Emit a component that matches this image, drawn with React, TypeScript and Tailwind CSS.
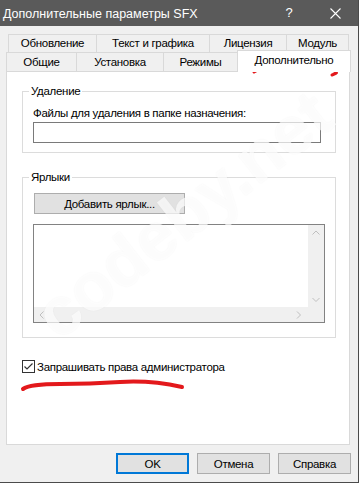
import React from "react";

function Chevron({ dir }: { dir: "up" | "down" | "left" | "right" }) {
  const pts: Record<string, string> = {
    up: "0.5,4.5 4,1 7.5,4.5",
    down: "0.5,1 4,4.5 7.5,1",
    left: "4.5,0.5 1,4 4.5,7.5",
    right: "1,0.5 4.5,4 1,7.5",
  };
  const horiz = dir === "left" || dir === "right";
  return (
    <svg width={horiz ? 6 : 8} height={horiz ? 8 : 6} viewBox={horiz ? "0 0 6 8" : "0 0 8 6"}>
      <polyline points={pts[dir]} fill="none" stroke="#bfbfbf" strokeWidth="1" />
    </svg>
  );
}

export default function App() {
  return (
    <div className="relative w-[359px] h-[483px] overflow-hidden bg-[#f0f0f0] border-r border-b border-[#4b4b4b] font-['Liberation_Sans',Arial,sans-serif] text-[11.5px] tracking-[-0.3px] text-black">
      {/* Title bar */}
      <div className="flex h-[26px] items-center bg-[#5a5a5a] text-white tracking-normal">
        <div className="flex-1 pl-[3px] text-[12.5px] leading-[16px] pt-[1px]">Дополнительные параметры SFX</div>
        <div className="flex h-[26px] w-[46px] items-center justify-center text-[13px] leading-[16px]">?</div>
        <div className="flex h-[26px] w-[46px] items-center justify-center">
          <svg width="11" height="11" viewBox="0 0 11 11">
            <path d="M0.5 0.5 L10.5 10.5 M10.5 0.5 L0.5 10.5" stroke="#ffffff" strokeWidth="1.1" />
          </svg>
        </div>
      </div>

      {/* Tabs */}
      <div className="mt-[8px]">
        <div className="ml-[8px] flex h-[18px]">
          <div className="w-[88px] border-l border-t border-[#d9d9d9] text-center leading-[17px]">Обновление</div>
          <div className="w-[113px] border-l border-t border-[#d9d9d9] text-center leading-[17px]">Текст и графика</div>
          <div className="w-[77px] border-l border-t border-[#d9d9d9] text-center leading-[17px]">Лицензия</div>
          <div className="w-[63px] border-l border-r border-t border-[#d9d9d9] text-center leading-[17px]">Модуль</div>
        </div>
        <div className="ml-[6px] flex h-[19px] items-start">
          <div className="h-[19px] w-[70px] border-l border-t border-[#d9d9d9] text-center leading-[19px]">Общие</div>
          <div className="h-[19px] w-[87px] border-l border-t border-[#d9d9d9] text-center leading-[19px]">Установка</div>
          <div className="h-[19px] w-[74px] border-l border-t border-[#d9d9d9] text-center leading-[19px]">Режимы</div>
          <div className="relative z-10 -mt-[2px] h-[22px] w-[114px] border-l border-r border-t border-[#d9d9d9] bg-white text-center leading-[18px]">Дополнительно</div>
        </div>
      </div>

      {/* Panel */}
      <div className="ml-[6px] h-[374px] w-[344px] border border-[#d9d9d9] bg-white pt-[19px]">
        {/* Group: Удаление */}
        <div className="relative ml-[15px] w-[314px] border border-[#dcdcdc] pb-[9px]">
          <span className="absolute left-[6px] top-[-9px] bg-white px-[2px] leading-[16px]">Удаление</span>
          <div className="ml-[10px] mt-[13px] leading-[16px]">Файлы для удаления в папке назначения:</div>
          <div className="ml-[10px] mt-[1px] h-[21px] w-[288px] border border-[#7a7a7a] bg-white" />
        </div>

        {/* Group: Ярлыки */}
        <div className="relative ml-[15px] mt-[24px] w-[314px] border border-[#dcdcdc] pb-[14px]">
          <span className="absolute left-[6px] top-[-9px] bg-white px-[2px] leading-[16px]">Ярлыки</span>
          <div className="ml-[11px] mt-[15px] flex h-[21px] w-[151px] items-center justify-center border border-[#adadad] bg-[#e1e1e1] leading-[16px]">
            Добавить ярлык...
          </div>
          <div className="ml-[10px] mt-[10px] grid h-[99px] w-[292px] grid-cols-[1fr_16px] grid-rows-[1fr_15px] border border-[#828282] bg-white">
            <div />
            <div className="flex flex-col items-center justify-between bg-[#f0f0f0] pb-[4px] pt-[5px]">
              <Chevron dir="up" />
              <Chevron dir="down" />
            </div>
            <div className="flex items-center justify-between bg-[#f0f0f0] pl-[5px] pr-[6px]">
              <Chevron dir="left" />
              <Chevron dir="right" />
            </div>
            <div className="bg-[#f0f0f0]" />
          </div>
        </div>

        {/* Checkbox */}
        <div className="ml-[15px] mt-[22px] flex h-[13px] items-center gap-[2px]">
          <div className="flex h-[13px] w-[13px] items-center justify-center border border-[#333333] bg-white">
            <svg width="11" height="11" viewBox="0 0 11 11">
              <polyline points="1.5,5.5 4,8 9.5,2.5" fill="none" stroke="#333333" strokeWidth="1.2" />
            </svg>
          </div>
          <span className="leading-[16px]">Запрашивать права администратора</span>
        </div>
      </div>

      {/* Buttons */}
      <div className="mt-[8px] flex justify-end gap-[8px] pr-[7px]">
        <div className="flex h-[21px] w-[73px] items-center justify-center border-2 border-[#0078d7] bg-[#e1e1e1] leading-[16px]">OK</div>
        <div className="flex h-[21px] w-[73px] items-center justify-center border border-[#adadad] bg-[#e1e1e1] leading-[16px]">Отмена</div>
        <div className="flex h-[21px] w-[73px] items-center justify-center border border-[#adadad] bg-[#e1e1e1] leading-[16px]">Справка</div>
      </div>

      {/* Watermark */}
      <div className="pointer-events-none absolute left-[183px] top-[214px] -translate-x-1/2 -translate-y-1/2 rotate-[-38deg] whitespace-nowrap font-['Liberation_Sans',Arial,sans-serif] text-[68px] font-bold leading-none tracking-normal text-white/70 [text-shadow:0_0_2px_rgba(0,0,0,0.04)]">
        codeby.net
      </div>

      {/* Red annotations */}
      <svg className="pointer-events-none absolute left-0 top-0" width="359" height="483" viewBox="0 0 359 483">
        <path d="M254 72 Q262 66 285 67 T330 70 Q342 72 332 75" fill="none" stroke="#e3191c" strokeWidth="3" strokeLinecap="round" />
        <path d="M23 389 Q30 384 60 384 T120 382 T182 387" fill="none" stroke="#e3191c" strokeWidth="4" strokeLinecap="round" />
      </svg>
    </div>
  );
}
